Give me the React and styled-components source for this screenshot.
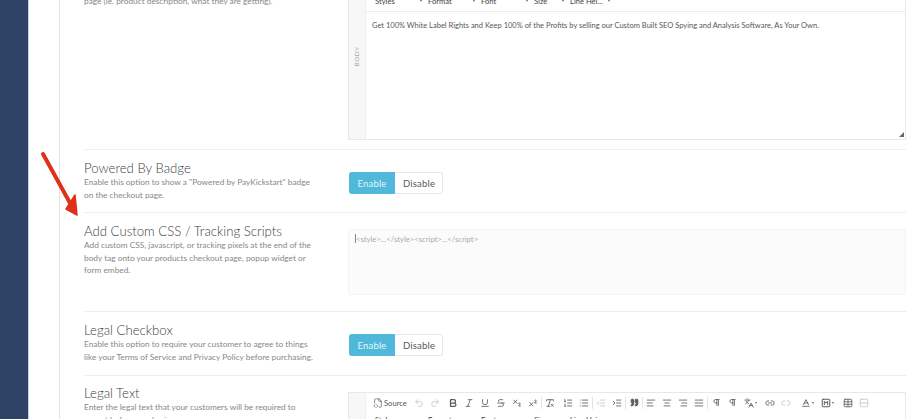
import React from 'react';
import styled, { createGlobalStyle } from 'styled-components';
import {
  FileCode2, Undo2, Redo2, Bold, Italic, Underline, Strikethrough, Subscript, Superscript,
  RemoveFormatting, ListOrdered, List, IndentDecrease, IndentIncrease, Quote, AlignLeft,
  AlignCenter, AlignRight, AlignJustify, Pilcrow, Languages, Link2, Unlink2, Baseline,
  SquareM, Table, Rows2,
} from 'lucide-react';

const GlobalStyle = createGlobalStyle`
  html, body { margin: 0; height: 100%; background: #fff; overflow: hidden; }
  body { font-family: "Lato", "Open Sans", sans-serif; color: #555; }
`;

// Page shell
const Page = styled.div`
  position: relative;
  display: flex;
  height: 100vh;
  overflow: hidden;
`;

const Sidebar = styled.aside`
  width: 28px;
  flex: none;
  background: #2f4366;
  border-right: 1px solid #c3cfdc;
`;

const Content = styled.main`
  flex: 1;
  padding-left: 30px;
`;

const Panel = styled.div`
  border-left: 1px solid #e3e3e3;
  margin-top: -44px;
  padding: 0 14px 0 24px;
`;

// Form rows
const Row = styled.section`
  display: grid;
  grid-template-columns: 264px 1fr;
  padding-top: ${(p) => p.$top}px;
  height: ${(p) => p.$height}px;
  box-sizing: border-box;
  border-bottom: 1px solid #eee;

  &:last-child {
    border-bottom: 0;
  }
`;

const Info = styled.div`
  padding-top: ${(p) => p.$offset || 0}px;
`;

const Title = styled.h3`
  margin: 0;
  font-size: 13.2px;
  font-weight: 300;
  line-height: 15px;
  color: #3c3f44;
`;

const Desc = styled.p`
  margin: 0;
  width: 236px;
  font-size: 8.3px;
  line-height: 12.5px;
  color: #85888c;
`;

// Toggle
const Toggle = styled.div`
  display: inline-flex;
  align-self: start;
  justify-self: start;
  height: 22px;
  margin: ${(p) => p.$top}px 0 0 1px;
  border-radius: 3px;
  box-shadow: inset 0 0 0 1px #e9e9e9;
`;

const ToggleOption = styled.span`
  display: flex;
  align-items: center;
  justify-content: center;
  width: ${(p) => (p.$active ? 46 : 48)}px;
  font-size: 9.5px;
  letter-spacing: 0.2px;
  border-radius: ${(p) => (p.$active ? '3px 0 0 3px' : '0 3px 3px 0')};
  background: ${(p) => (p.$active ? '#4fb8db' : 'transparent')};
  color: ${(p) => (p.$active ? '#e4f5fa' : '#55585c')};
`;

// Rich text editor
const Editor = styled.div`
  display: flex;
  align-self: start;
  height: ${(p) => p.$height}px;
  margin-top: ${(p) => p.$top || 0}px;
  box-sizing: border-box;
  border: 1px solid #e8e8e8;
  background: #fff;
`;

const Gutter = styled.div`
  width: 16px;
  flex: none;
  display: flex;
  align-items: center;
  justify-content: center;
  background: #f7f7f7;
  border-right: 1px solid #eee;
`;

const GutterLabel = styled.span`
  transform: rotate(-90deg);
  font-size: 6.5px;
  letter-spacing: 0.4px;
  color: #a8a8a8;
`;

const EditorMain = styled.div`
  position: relative;
  flex: 1;
  display: flex;
  flex-direction: column;
`;

const Toolbar = styled.div`
  height: 38px;
  flex: none;
  box-sizing: border-box;
  padding-left: 7px;
  border-bottom: 1px solid #ececec;
`;

const ToolRow = styled.div`
  display: flex;
  align-items: center;
  height: 19px;
`;

const SelectRow = styled.div`
  display: flex;
  align-items: center;
  height: 15px;
  padding-left: 2px;
`;

const Tool = styled.span`
  display: flex;
  align-items: center;
  justify-content: center;
  flex: none;
  width: ${(p) => p.$width || 16}px;
  color: ${(p) => (p.$muted ? '#c4c4c4' : '#5a5a5a')};
`;

const SourceTool = styled(Tool)`
  justify-content: flex-start;
  gap: 1px;
  font-size: 7.6px;
  color: #555;
`;

const Caret = styled.span`
  width: 0;
  height: 0;
  margin-left: 1px;
  border-left: 1.5px solid transparent;
  border-right: 1.5px solid transparent;
  border-top: 2px solid #666;
`;

const Sep = styled.span`
  flex: none;
  width: 1px;
  height: 12px;
  background: #e4e4e4;
`;

const Spacer = styled.span`
  flex: none;
  width: ${(p) => p.$width}px;
`;

const Select = styled.span`
  display: flex;
  align-items: center;
  justify-content: space-between;
  flex: none;
  width: ${(p) => p.$width}px;
  padding-right: 6px;
  box-sizing: border-box;
  font-size: 7.6px;
  color: #444;
`;

const Body = styled.div`
  flex: 1;
  padding: 8px 6px;
  font-size: 7.5px;
  line-height: 11px;
  color: #55585b;
  white-space: nowrap;
`;

const Grip = styled.span`
  position: absolute;
  right: 1px;
  bottom: 2px;
  width: 0;
  height: 0;
  border-left: 5px solid transparent;
  border-bottom: 5px solid #666;
`;

const Code = styled.div`
  align-self: start;
  height: 66px;
  margin-top: 5px;
  box-sizing: border-box;
  padding: 4px 6px;
  font-size: 7.7px;
  line-height: 11px;
  color: #a9abae;
  background: #fbfbfb;
  border: 1px solid #f3f3f3;
  border-radius: 3px;
`;

const Cursor = styled.span`
  display: inline-block;
  width: 1px;
  height: 9px;
  vertical-align: -1px;
  background: #888;
`;

// Annotation drawn over the page
const Annotation = styled.svg`
  position: absolute;
  left: 36px;
  top: 146px;
`;

const icon = { size: 10, strokeWidth: 2 };

const Toolbars = () => (
  <Toolbar>
    <ToolRow>
      <SourceTool $width={38}><FileCode2 size={10} strokeWidth={1.6} />Source</SourceTool>
      <Tool $muted><Undo2 {...icon} /></Tool>
      <Tool $muted><Redo2 {...icon} /></Tool>
      <Spacer $width={2} />
      <Tool><Bold size={10} strokeWidth={3} /></Tool>
      <Tool><Italic {...icon} /></Tool>
      <Tool><Underline {...icon} /></Tool>
      <Tool><Strikethrough {...icon} /></Tool>
      <Tool><Subscript {...icon} /></Tool>
      <Tool><Superscript {...icon} /></Tool>
      <Sep />
      <Tool><RemoveFormatting {...icon} /></Tool>
      <Spacer $width={2} />
      <Tool><ListOrdered {...icon} /></Tool>
      <Tool><List {...icon} /></Tool>
      <Sep />
      <Tool $muted><IndentDecrease {...icon} /></Tool>
      <Tool><IndentIncrease {...icon} /></Tool>
      <Sep />
      <Tool><Quote size={9} strokeWidth={2.4} fill="currentColor" /></Tool>
      <Sep />
      <Tool><AlignLeft {...icon} /></Tool>
      <Tool><AlignCenter {...icon} /></Tool>
      <Tool><AlignRight {...icon} /></Tool>
      <Tool><AlignJustify {...icon} /></Tool>
      <Sep />
      <Tool><Pilcrow size={9} strokeWidth={2.2} /></Tool>
      <Tool><Pilcrow size={9} strokeWidth={2.2} /></Tool>
      <Tool $width={20}><Languages {...icon} /><Caret /></Tool>
      <Spacer $width={2} />
      <Tool><Link2 {...icon} /></Tool>
      <Tool $muted><Unlink2 {...icon} /></Tool>
      <Spacer $width={3} />
      <Tool $width={20}><Baseline {...icon} /><Caret /></Tool>
      <Tool $width={20}><SquareM size={10} strokeWidth={2.4} /><Caret /></Tool>
      <Spacer $width={3} />
      <Tool><Table {...icon} /></Tool>
      <Tool $muted><Rows2 {...icon} /></Tool>
    </ToolRow>
    <SelectRow>
      <Select $width={53}>Styles<Caret /></Select>
      <Select $width={53}>Format<Caret /></Select>
      <Select $width={53}>Font<Caret /></Select>
      <Select $width={36}>Size<Caret /></Select>
      <Select $width={46}>Line Hei...<Caret /></Select>
    </SelectRow>
  </Toolbar>
);

const RichEditor = ({ height, top, children }) => (
  <Editor $height={height} $top={top}>
    <Gutter><GutterLabel>BODY</GutterLabel></Gutter>
    <EditorMain>
      <Toolbars />
      <Body>{children}</Body>
      <Grip />
    </EditorMain>
  </Editor>
);

const BadgeToggle = ({ top }) => (
  <Toggle $top={top}>
    <ToggleOption $active>Enable</ToggleOption>
    <ToggleOption>Disable</ToggleOption>
  </Toggle>
);

const App = () => (
  <Page>
    <GlobalStyle />
    <Sidebar />
    <Content>
      <Panel>
        <Row $top={17} $height={194}>
          <Info $offset={22}>
            <Desc>page (ie. product description, what they are getting).</Desc>
          </Info>
          <RichEditor height={167}>
            Get 100% White Label Rights and Keep 100% of the Profits by selling our Custom Built SEO Spying and Analysis Software, As Your Own.
          </RichEditor>
        </Row>
        <Row $top={11} $height={63}>
          <Info>
            <Title>Powered By Badge</Title>
            <Desc>Enable this option to show a "Powered by PayKickstart" badge on the checkout page.</Desc>
          </Info>
          <BadgeToggle top={11} />
        </Row>
        <Row $top={11} $height={99}>
          <Info>
            <Title>Add Custom CSS / Tracking Scripts</Title>
            <Desc>Add custom CSS, javascript, or tracking pixels at the end of the body tag onto your products checkout page, popup widget or form embed.</Desc>
          </Info>
          <Code><Cursor />&lt;style&gt;...&lt;/style&gt;&lt;script&gt;...&lt;/script&gt;</Code>
        </Row>
        <Row $top={11} $height={64}>
          <Info>
            <Title>Legal Checkbox</Title>
            <Desc>Enable this option to require your customer to agree to things like your Terms of Service and Privacy Policy before purchasing.</Desc>
          </Info>
          <BadgeToggle top={11} />
        </Row>
        <Row $top={10} $height={60}>
          <Info>
            <Title>Legal Text</Title>
            <Desc>Enter the legal text that your customers will be required to accept before purchasing.</Desc>
          </Info>
          <RichEditor height={167} top={6} />
        </Row>
      </Panel>
    </Content>
    <Annotation width="46" height="74" viewBox="0 0 46 74">
      <path d="M7 8 L34 57" stroke="#de3119" strokeWidth="4" strokeLinecap="round" />
      <path d="M41 69 L30 63 L39 49 Z" fill="#de3119" stroke="#de3119" strokeWidth="1.5" strokeLinejoin="round" />
    </Annotation>
  </Page>
);

export default App;
